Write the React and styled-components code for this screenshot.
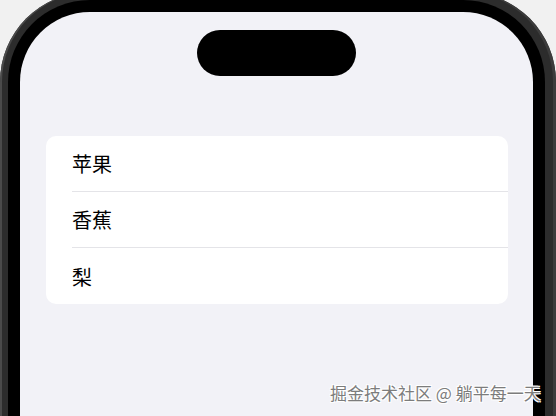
import React from "react";
import styled, { createGlobalStyle } from "styled-components";

const Global = createGlobalStyle`
  html, body {
    margin: 0;
    padding: 0;
    width: 556px;
    height: 416px;
    overflow: hidden;
    background: #f1f1f1;
    font-family: "Noto Sans CJK SC", "Noto Sans", sans-serif;
  }
`;

const Page = styled.div`
  position: relative;
  width: 556px;
  height: 416px;
  overflow: hidden;
`;

const Frame = styled.div`
  margin-top: -8px;
  width: 556px;
  box-sizing: border-box;
  padding: 8px 11px 0 8px;
  background: #2c2c2c;
  border-radius: 90px 90px 0 0;
  box-shadow: inset 2px 0 0 #4a4a4a, inset -3px 0 0 #3c3c3c;
`;

const Bezel = styled.div`
  background: #000;
  border-radius: 82px 82px 0 0;
  padding: 12px 12px 0 12px;
`;

const Screen = styled.div`
  background: #f2f2f7;
  border-radius: 70px 70px 0 0;
  height: 440px;
  display: flex;
  flex-direction: column;
  align-items: center;
  padding-top: 18px;
  box-sizing: border-box;
`;

const Island = styled.div`
  width: 159px;
  height: 46px;
  border-radius: 23px;
  background: #000;
  flex-shrink: 0;
`;

const Card = styled.div`
  align-self: stretch;
  margin: 60px 25px 0 26px;
  background: #fff;
  border-radius: 10px;
  overflow: hidden;
`;

const Row = styled.div`
  height: 56px;
  padding-left: 26px;
  display: flex;
  align-items: center;
`;

const RowInner = styled.div`
  flex: 1;
  height: 100%;
  display: flex;
  align-items: center;
  box-sizing: border-box;
  border-bottom: ${(p) => (p.$last ? "none" : "1px solid #e4e4e8")};
  font-size: 20px;
  color: #000;
`;

const Watermark = styled.div`
  position: absolute;
  left: 330px;
  top: 383px;
  font-size: 17px;
  line-height: 20px;
  color: #7c7c7c;
  white-space: nowrap;
  text-shadow: 0 0 1px #fff, 1px 1px 0 #fff, -1px -1px 0 #fff, 1px -1px 0 #fff, -1px 1px 0 #fff;
`;

const fruits = ["苹果", "香蕉", "梨"];

export default function App() {
  return (
    <Page>
      <Global />
      <Frame>
        <Bezel>
          <Screen>
            <Island />
            <Card>
              {fruits.map((f, i) => (
                <Row key={f}>
                  <RowInner $last={i === fruits.length - 1}>{f}</RowInner>
                </Row>
              ))}
            </Card>
          </Screen>
        </Bezel>
      </Frame>
      <Watermark>掘金技术社区 @ 躺平每一天</Watermark>
    </Page>
  );
}
